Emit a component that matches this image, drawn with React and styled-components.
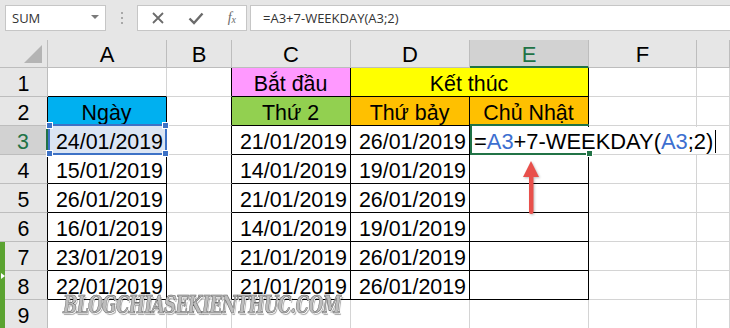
import styled, { createGlobalStyle } from "styled-components";

const GlobalStyle = createGlobalStyle`
    html, body {
        margin: 0;
        padding: 0;
        background: #e6e6e6;
        overflow: hidden;
    }
`;

const GRAY = "#d4d4d4";
const HEAD_LINE = "#bdbdbd";
const BLACK = "#000000";
const GREEN = "#217346";

const COLS = ["A", "B", "C", "D", "E", "F", "G"];

const dates = [
    ["24/01/2019", "21/01/2019", "26/01/2019"],
    ["15/01/2019", "14/01/2019", "19/01/2019"],
    ["26/01/2019", "21/01/2019", "26/01/2019"],
    ["16/01/2019", "14/01/2019", "19/01/2019"],
    ["23/01/2019", "21/01/2019", "26/01/2019"],
    ["22/01/2019", "21/01/2019", "26/01/2019"],
];

export default function App() {
    return (
        <>
            <GlobalStyle />
            <Page>
                <FormulaBar>
                    <NameBox>
                        <span>SUM</span>
                        <Caret />
                    </NameBox>
                    <Dots>
                        <i /><i /><i />
                    </Dots>
                    <ButtonsBox>
                        <svg width="14" height="14" viewBox="0 0 14 14">
                            <path d="M2 2 L12 12 M12 2 L2 12" stroke="#6b6b6b" strokeWidth="1.8" />
                        </svg>
                        <svg width="16" height="14" viewBox="0 0 16 14">
                            <path d="M1.5 7.5 L6 12 L14.5 2.5" stroke="#6b6b6b" strokeWidth="2.4" fill="none" />
                        </svg>
                        <Fx>f<sub>x</sub></Fx>
                    </ButtonsBox>
                    <FormulaInput>=A3+7-WEEKDAY(A3;2)</FormulaInput>
                </FormulaBar>
                <Sheet>
                    <Grid>
                        <Corner>
                            <svg width="20" height="20" viewBox="0 0 20 20">
                                <polygon points="19,1 19,19 1,19" fill="#b4b4b4" />
                            </svg>
                        </Corner>
                        {COLS.map(c => (
                            <ColHead key={c} $active={c === "E"}>{c === "G" ? "" : c}</ColHead>
                        ))}
                        {Array.from({ length: 9 }, (_, i) => <SheetRow key={i} row={i + 1} />)}
                    </Grid>
                    <SideTab>
                        <span />
                    </SideTab>
                    <Arrow width="20" height="56" viewBox="0 0 20 56">
                        <polygon points="10,1 18,17 2,17" fill="#e8504b" />
                        <rect x="8" y="14" width="4.5" height="40" rx="2" fill="#e8504b" />
                    </Arrow>
                    <Watermark>BLOGCHIASEKIENTHUC.COM</Watermark>
                </Sheet>
            </Page>
        </>
    );
}

function SheetRow({ row }) {
    const inTable = row >= 2 && row <= 8;
    const cells = [];

    // cột A
    const aProps = { $br: inTable ? BLACK : GRAY, $bb: row <= 8 ? BLACK : GRAY };
    if (row === 2) {
        cells.push(<Cell key="A" {...aProps} $bg="#00b0f0" $center>Ngày</Cell>);
    } else if (inTable) {
        cells.push(
            <Cell key="A" {...aProps} $bg={row === 3 ? "#dbe5f3" : "#fff"}>
                {dates[row - 3][0]}
                {row === 3 && (
                    <Selection>
                        <Handle $pos="tl" /><Handle $pos="tr" /><Handle $pos="bl" /><Handle $pos="br" />
                    </Selection>
                )}
            </Cell>
        );
    } else {
        cells.push(<Cell key="A" {...aProps} />);
    }

    // cột B
    cells.push(<Cell key="B" $br={row <= 8 ? BLACK : GRAY} $bb={GRAY} />);

    // cột C, D, E
    if (row === 1) {
        cells.push(<Cell key="C" $br={BLACK} $bb={BLACK} $bg="#ff99ff" $center>Bắt đầu</Cell>);
        cells.push(<Cell key="DE" $span={2} $br={BLACK} $bb={BLACK} $bg="#ffff00" $center>Kết thúc</Cell>);
    } else if (row === 2) {
        cells.push(<Cell key="C" $br={BLACK} $bb={BLACK} $bg="#92d050" $center>Thứ 2</Cell>);
        cells.push(<Cell key="D" $br={BLACK} $bb={BLACK} $bg="#ffc000" $center>Thứ bảy</Cell>);
        cells.push(<Cell key="E" $br={BLACK} $bb={BLACK} $bg="#ffc000" $center>Chủ Nhật</Cell>);
    } else if (row <= 8) {
        cells.push(<Cell key="C" $br={BLACK} $bb={BLACK}>{dates[row - 3][1]}</Cell>);
        cells.push(<Cell key="D" $br={BLACK} $bb={BLACK}>{dates[row - 3][2]}</Cell>);
        if (row === 3) {
            cells.push(
                <Cell key="E" $br={BLACK} $bb={BLACK} $editing>
                    <EditText>
                        =<Ref>A3</Ref>+7-WEEKDAY(<Ref>A3</Ref>;2)<Caretline />
                    </EditText>
                    <EditBox><Handle $pos="br" $green /></EditBox>
                </Cell>
            );
        } else {
            cells.push(<Cell key="E" $br={BLACK} $bb={BLACK} />);
        }
    } else {
        cells.push(<Cell key="C" $br={GRAY} $bb={GRAY} />);
        cells.push(<Cell key="D" $br={GRAY} $bb={GRAY} />);
        cells.push(<Cell key="E" $br={GRAY} $bb={GRAY} />);
    }

    cells.push(<Cell key="F" $br={GRAY} $bb={GRAY} />);
    cells.push(<Cell key="G" $br={GRAY} $bb={GRAY} />);

    return (
        <>
            <RowHead $active={row === 3} $edge={inTable ? BLACK : HEAD_LINE}>{row}</RowHead>
            {cells}
        </>
    );
}

const Page = styled.div`
    width: 730px;
    height: 328px;
    overflow: hidden;
    background: #e6e6e6;
    font-family: "Liberation Sans", Arial, sans-serif;
`;

const FormulaBar = styled.div`
    height: 40px;
    box-sizing: border-box;
    padding: 5px 0 0 5px;
    display: flex;
    align-items: flex-start;
    font-family: "Open Sans", "Noto Sans", sans-serif;
    font-size: 13px;
    color: #333;
`;

const NameBox = styled.div`
    width: 101px;
    height: 26px;
    box-sizing: border-box;
    background: #fff;
    border: 1px solid #c6c6c6;
    display: flex;
    align-items: center;
    justify-content: space-between;
    padding: 0 6px 0 6px;
    color: #333;
`;

const Caret = styled.span`
    width: 0;
    height: 0;
    border-left: 4px solid transparent;
    border-right: 4px solid transparent;
    border-top: 4px solid #7a7a7a;
    margin-top: -3px;
`;

const Dots = styled.div`
    width: 31px;
    height: 26px;
    display: flex;
    flex-direction: column;
    align-items: center;
    justify-content: center;
    gap: 3px;

    i {
        width: 2px;
        height: 2px;
        background: #a8a8a8;
    }
`;

const ButtonsBox = styled.div`
    width: 110px;
    height: 26px;
    box-sizing: border-box;
    background: #fff;
    border: 1px solid #c6c6c6;
    display: flex;
    align-items: center;
    justify-content: space-between;
    padding: 0 10px 0 13px;
`;

const Fx = styled.span`
    font-family: "Liberation Serif", serif;
    font-style: italic;
    font-size: 14px;
    color: #6b6b6b;

    sub {
        font-size: 10px;
        vertical-align: baseline;
        position: relative;
        top: 1px;
    }
`;

const FormulaInput = styled.div`
    flex: 1;
    margin-left: 3px;
    height: 26px;
    box-sizing: border-box;
    background: #fff;
    border: 1px solid #c6c6c6;
    border-right: none;
    display: flex;
    align-items: center;
    padding-left: 12px;
    color: #333;
`;

const Sheet = styled.div`
    position: relative;
    background: #fff;
`;

const Grid = styled.div`
    display: grid;
    grid-template-columns: 48px 119px 65px 119px 119px 119px 108px 1fr;
    grid-template-rows: 28px repeat(9, 29px);
    font-size: 21.4px;
    color: #000;
`;

const Corner = styled.div`
    background: #e6e6e6;
    border-right: 1px solid ${HEAD_LINE};
    border-bottom: 1px solid ${HEAD_LINE};
    display: flex;
    align-items: flex-end;
    justify-content: flex-end;
    padding: 0 4px 3px 0;
`;

const ColHead = styled.div`
    background: ${p => (p.$active ? "#d2d2d2" : "#e6e6e6")};
    color: ${p => (p.$active ? GREEN : "#000")};
    border-right: 1px solid ${HEAD_LINE};
    border-bottom: ${p => (p.$active ? `2px solid ${GREEN}` : `1px solid ${HEAD_LINE}`)};
    text-align: center;
    font-size: 22px;
    line-height: 28px;
    padding-top: 1px;
    box-sizing: border-box;
    overflow: hidden;
`;

const RowHead = styled.div`
    background: ${p => (p.$active ? "#d2d2d2" : "#e6e6e6")};
    color: ${p => (p.$active ? GREEN : "#000")};
    border-right: ${p => (p.$active ? `2px solid ${GREEN}` : `1px solid ${p.$edge}`)};
    border-bottom: 1px solid ${HEAD_LINE};
    text-align: center;
    line-height: 26px;
    padding-top: 3px;
    box-sizing: border-box;
`;

const Cell = styled.div`
    position: relative;
    grid-column: span ${p => p.$span || 1};
    background: ${p => p.$bg || "#fff"};
    border-right: 1px solid ${p => p.$br};
    border-bottom: 1px solid ${p => p.$bb};
    text-align: ${p => (p.$center ? "center" : "right")};
    padding: 3px 3px 0 2px;
    line-height: 26px;
    box-sizing: border-box;
    white-space: nowrap;
    z-index: ${p => (p.$editing ? 3 : "auto")};
`;

const Selection = styled.div`
    position: absolute;
    left: 0;
    top: -2px;
    right: -1px;
    bottom: -1px;
    border: 2px solid #3d72c6;
    z-index: 2;
`;

const Handle = styled.span`
    position: absolute;
    width: 5px;
    height: 5px;
    background: ${p => (p.$green ? GREEN : "#3d72c6")};
    border: 1px solid #fff;
    ${p => (p.$pos[0] === "t" ? "top: -4px;" : "bottom: -4px;")}
    ${p => (p.$pos[1] === "l" ? "left: -4px;" : "right: -4px;")}
`;

const EditBox = styled.div`
    position: absolute;
    left: 0;
    top: -2px;
    right: -1px;
    bottom: -1px;
    border: 2px solid ${GREEN};
    border-right: none;
    pointer-events: none;
`;

const EditText = styled.span`
    position: absolute;
    left: 2px;
    top: 1px;
    bottom: 0;
    padding: 2px 4px 0 2px;
    background: #fff;
    text-align: left;
    font-size: 21.9px;
    line-height: 26px;
    display: flex;
    align-items: center;
`;

const Ref = styled.span`
    color: #3d6fd0;
`;

const Caretline = styled.span`
    display: inline-block;
    width: 1px;
    height: 23px;
    background: #000;
    margin-left: 2px;
`;

const SideTab = styled.div`
    position: absolute;
    left: 0;
    top: 202px;
    width: 5px;
    height: 90px;
    background: #5ba331;

    span {
        position: absolute;
        top: 31px;
        left: 1px;
        width: 0;
        height: 0;
        border-top: 3px solid transparent;
        border-bottom: 3px solid transparent;
        border-left: 4px solid #fff;
    }
`;

const Arrow = styled.svg`
    position: absolute;
    left: 521px;
    top: 120px;
    z-index: 4;
    filter: drop-shadow(1px 1px 1px rgba(0, 0, 0, 0.25));
`;

const Watermark = styled.div`
    position: absolute;
    left: 63px;
    top: 250px;
    z-index: 5;
    font-family: "DejaVu Serif", "Liberation Serif", serif;
    font-weight: bold;
    font-style: italic;
    font-size: 25px;
    letter-spacing: -1px;
    color: #bdbdbd;
    -webkit-text-stroke: 0.6px #5a5a5a;
    text-shadow: 1px 1px 0 #fff, 2px 2px 1px rgba(0, 0, 0, 0.35);
    transform: scaleX(0.68);
    transform-origin: left top;
    white-space: nowrap;
`;
